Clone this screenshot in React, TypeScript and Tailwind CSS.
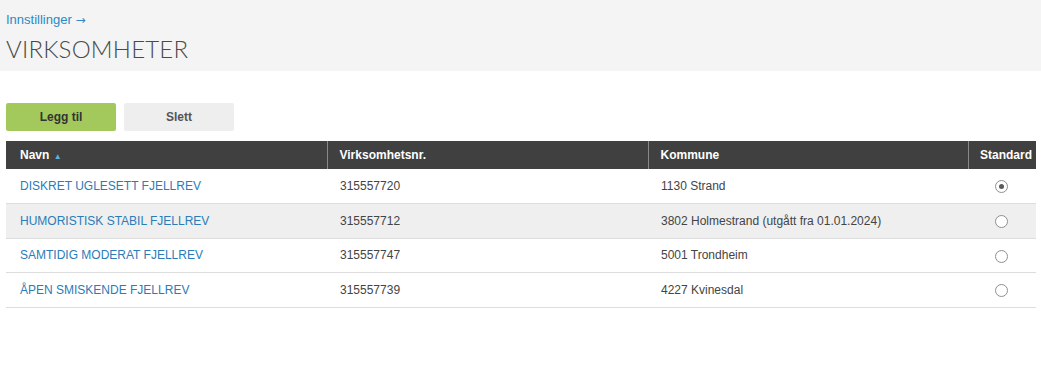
import React from "react";

interface Company {
  name: string;
  orgnr: string;
  kommune: string;
  standard: boolean;
}

const companies: Company[] = [
  { name: "DISKRET UGLESETT FJELLREV", orgnr: "315557720", kommune: "1130 Strand", standard: true },
  { name: "HUMORISTISK STABIL FJELLREV", orgnr: "315557712", kommune: "3802 Holmestrand (utgått fra 01.01.2024)", standard: false },
  { name: "SAMTIDIG MODERAT FJELLREV", orgnr: "315557747", kommune: "5001 Trondheim", standard: false },
  { name: "ÅPEN SMISKENDE FJELLREV", orgnr: "315557739", kommune: "4227 Kvinesdal", standard: false },
];

function Radio({ checked }: { checked: boolean }) {
  return (
    <span className="inline-flex h-[13px] w-[13px] items-center justify-center rounded-full border border-[#8f8f8f] bg-white align-middle">
      {checked && <span className="h-[5px] w-[5px] rounded-full bg-[#5a5a5a]" />}
    </span>
  );
}

export default function App() {
  return (
    <div className="min-h-[367px] bg-white font-['Liberation_Sans',Arial,sans-serif]">
      <div className="h-[71px] bg-[#f4f4f4] px-[6px] pt-[12px]">
        <a className="block text-[13px] leading-[16px] text-[#2a8ac6]">
          Innstillinger <span className="font-['DejaVu_Sans',sans-serif] text-[12px]">→</span>
        </a>
        <h1 className="mt-[6px] font-['Lato',sans-serif] text-[24px] font-light leading-[30px] tracking-[0.2px] text-[#4a4a4a]">
          VIRKSOMHETER
        </h1>
      </div>

      <div className="px-[6px]">
        <div className="mt-[32px] flex gap-[8px]">
          <button className="h-[28px] w-[110px] rounded-[2px] bg-[#a3c95c] text-[12px] font-bold text-[#333]">Legg til</button>
          <button className="h-[28px] w-[110px] rounded-[2px] bg-[#eeeeee] text-[12px] font-bold text-[#555]">Slett</button>
        </div>

        <table className="mt-[10px] w-[1030px] border-collapse text-[12px]">
          <thead>
            <tr className="h-[28px] bg-[#404040] text-left font-bold text-white">
              <th className="w-[321px] border-r border-[#8a8a8a] pl-[14px]">
                Navn <span className="ml-[1px] text-[8px] text-[#5fb0dc]">▲</span>
              </th>
              <th className="w-[321px] border-r border-[#8a8a8a] pl-[12px]">Virksomhetsnr.</th>
              <th className="w-[320px] border-r border-[#8a8a8a] pl-[12px]">Kommune</th>
              <th className="pr-[4px] text-right">Standard</th>
            </tr>
          </thead>
          <tbody>
            {companies.map((c, i) => (
              <tr key={c.orgnr} className={`h-[34.5px] border-b border-[#dddddd] ${i === 1 ? "bg-[#efefef]" : "bg-white"}`}>
                <td className="pl-[14px] text-[#2a7cb8]">{c.name}</td>
                <td className="pl-[13px] text-[#444]">{c.orgnr}</td>
                <td className="pl-[13px] text-[#444]">{c.kommune}</td>
                <td className="pr-[2px] text-center">
                  <Radio checked={c.standard} />
                </td>
              </tr>
            ))}
          </tbody>
        </table>
      </div>
    </div>
  );
}
